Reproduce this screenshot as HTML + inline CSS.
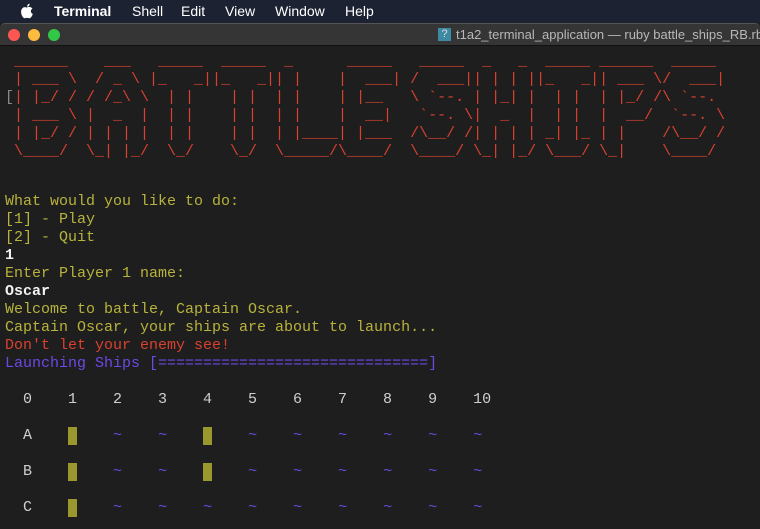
<!DOCTYPE html>
<html><head><meta charset="utf-8"><style>
*{margin:0;padding:0}
body{width:760px;height:529px;overflow:hidden;background:#1e1e1e;position:relative;font-family:"Liberation Sans",sans-serif}
#menu{position:absolute;left:0;top:0;width:760px;height:23px;background:#1c2232;color:#fff;font-size:14px}
#menu span{position:absolute;top:3px}
#title{position:absolute;left:0;top:23px;width:760px;height:21px;background:#353535;border-top:1px solid #555;border-bottom:1px solid #111;border-radius:5px 5px 0 0}
.dot{position:absolute;top:5px;width:12px;height:12px;border-radius:50%}
#ttxt{position:absolute;left:456px;top:3px;color:#b8b8b8;font-size:13px;white-space:nowrap}
#ico{position:absolute;left:438px;top:4px;width:13px;height:13px;background:#3f8aa3;color:#ddd;font-size:11px;line-height:13px;text-align:center}
pre{position:absolute;left:5px;top:49px;font-family:"Liberation Mono",monospace;font-size:15px;line-height:18px;color:#b8b33c;white-space:pre;letter-spacing:0}
.art{position:relative;top:4px}
.r{color:#d8412f}.w{color:#f2f2f2;font-weight:bold}.p{color:#6d48e6}.g{color:#cfcfcf}.c{color:#888}
.t{color:#6d48e6}
.b{display:inline-block;width:9px;height:18px;background:#9a972f;vertical-align:top}
</style></head><body>
<div id="menu">
<svg style="position:absolute;left:20px;top:3px" width="14" height="16" viewBox="0 0 14 16"><path d="M7 4.5C8 3.8 9.5 3.6 10.8 4.2 11.6 4.6 12.1 5.1 12.4 5.6 11 6.4 10.6 7.8 11 9.1 11.3 10 12 10.6 12.8 11 12.3 12.6 11.3 14.3 10.2 15 9.2 15.6 8.4 14.9 7 14.9 5.6 14.9 4.9 15.6 3.9 15 2.3 14 0.9 11 1.1 8.3 1.3 5.6 3.2 4 5 4.1 5.9 4.2 6.4 4.6 7 4.5Z M7.1 3.7C7 2.2 8.2 0.8 9.6 0.6 9.8 2.1 8.5 3.7 7.1 3.7Z" fill="#fff"/></svg>
<span style="left:54px;font-weight:bold">Terminal</span>
<span style="left:132px">Shell</span>
<span style="left:181px">Edit</span>
<span style="left:225px">View</span>
<span style="left:275px">Window</span>
<span style="left:345px">Help</span>
</div>
<div id="title">
<div class="dot" style="left:8px;background:#fc5753"></div>
<div class="dot" style="left:28px;background:#fdbb40"></div>
<div class="dot" style="left:48px;background:#33c748"></div>
<div id="ico">?</div>
<div id="ttxt">t1a2_terminal_application — ruby battle_ships_RB.rb</div>
</div>
<pre><span class="r art"> ______    ___   _____  _____  _      _____   _____  _   _  _____ ______  _____ 
 | ___ \  / _ \ |_   _||_   _|| |    |  ___| /  ___|| | | ||_   _|| ___ \/  ___|
<span class="c">[</span>| |_/ / / /_\ \  | |    | |  | |    | |__   \ `--. | |_| |  | |  | |_/ /\ `--. 
 | ___ \ |  _  |  | |    | |  | |    |  __|   `--. \|  _  |  | |  |  __/  `--. \
 | |_/ / | | | |  | |    | |  | |____| |___  /\__/ /| | | | _| |_ | |    /\__/ /
 \____/  \_| |_/  \_/    \_/  \_____/\____/  \____/ \_| |_/ \___/ \_|    \____/ </span>


What would you like to do:
[1] - Play
[2] - Quit
<span class="w">1</span>
Enter Player 1 name:
<span class="w">Oscar</span>
Welcome to battle, Captain Oscar.
Captain Oscar, your ships are about to launch...
<span class="r">Don't let your enemy see!</span>
<span class="p">Launching Ships [==============================]</span>

<span class="g">  0    1    2    3    4    5    6    7    8    9    10</span>

<span class="g">  A    <span class="b"></span>    <span class="t">~</span>    <span class="t">~</span>    <span class="b"></span>    <span class="t">~</span>    <span class="t">~</span>    <span class="t">~</span>    <span class="t">~</span>    <span class="t">~</span>    <span class="t">~</span></span>

<span class="g">  B    <span class="b"></span>    <span class="t">~</span>    <span class="t">~</span>    <span class="b"></span>    <span class="t">~</span>    <span class="t">~</span>    <span class="t">~</span>    <span class="t">~</span>    <span class="t">~</span>    <span class="t">~</span></span>

<span class="g">  C    <span class="b"></span>    <span class="t">~</span>    <span class="t">~</span>    <span class="t">~</span>    <span class="t">~</span>    <span class="t">~</span>    <span class="t">~</span>    <span class="t">~</span>    <span class="t">~</span>    <span class="t">~</span></span>
</pre>
</body></html>
